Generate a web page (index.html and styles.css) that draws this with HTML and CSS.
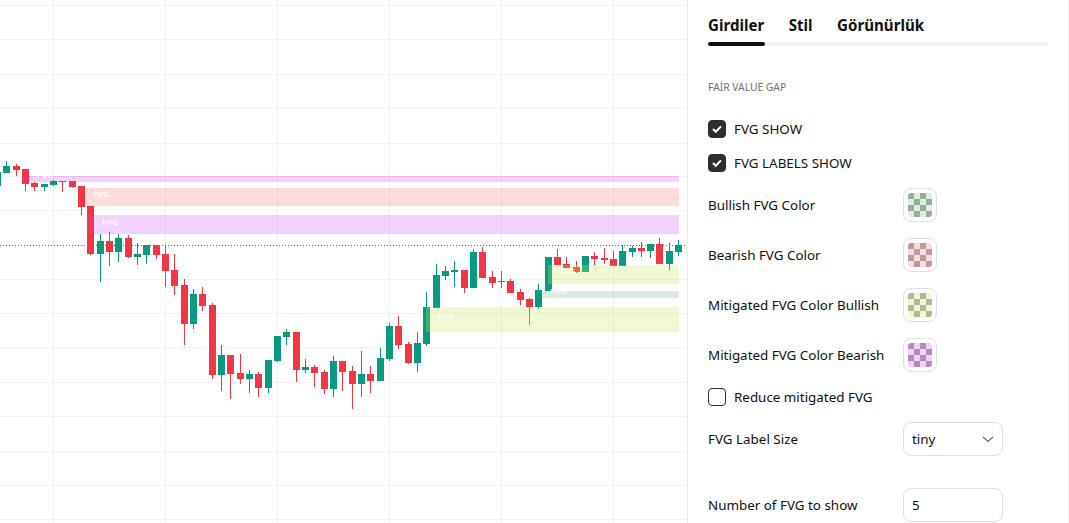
FILE: index.html
```html
<!DOCTYPE html>
<html lang="tr">
<head>
<meta charset="utf-8">
<title>FVG</title>
<link rel="stylesheet" href="styles.css">
</head>
<body>
<div class="app">
  <main class="chart">
    <svg class="plot" width="688" height="523" viewBox="0 0 688 523" shape-rendering="crispEdges">
      <path class="grid" d="M0 5.5H688M0 39.5H688M0 74.5H688M0 108.5H688M0 143.5H688M0 176.5H688M0 210.5H688M0 279.5H688M0 313.5H688M0 347.5H688M0 382.5H688M0 416.5H688M0 451.5H688M0 485.5H688M0 519.5H688M53.5 0V523M165.5 0V523M277.5 0V523M389.5 0V523M501.5 0V523M613.5 0V523"/>
      <path class="last" d="M0 245.5H688"/>
      <path class="up" d="M0 172h1v14h-1z
        M6 161h1v12h-1zM3 166h7v7h-7z
        M44 184h1v7h-1zM41 184h7v3h-7z
        M53 180h1v6h-1zM50 181h7v4h-7z
        M100 234h1v48h-1zM97 241h7v13h-7z
        M118 234h1v28h-1zM115 238h7v14h-7z
        M137 243h1v22h-1zM134 254h7v3h-7z
        M146 245h1v19h-1zM143 245h7v10h-7z
        M193 289h1v40h-1zM190 294h7v30h-7z
        M221 345h1v46h-1zM218 355h7v20h-7z
        M249 370h1v23h-1zM246 374h7v5h-7z
        M268 360h1v33h-1zM265 360h7v28h-7z
        M277 336h1v26h-1zM274 336h7v25h-7z
        M286 329h1v16h-1zM283 332h7v5h-7z
        M305 359h1v14h-1zM302 367h7v3h-7z
        M333 356h1v41h-1zM330 361h7v28h-7z
        M361 351h1v46h-1zM358 374h7v10h-7z
        M380 348h1v33h-1zM377 358h7v23h-7z
        M389 323h1v38h-1zM386 326h7v33h-7z
        M417 332h1v40h-1zM414 343h7v20h-7z
        M426 292h1v54h-1zM423 307h7v37h-7z
        M436 264h1v44h-1zM433 275h7v33h-7z
        M445 266h1v14h-1zM442 271h7v5h-7z
        M454 261h1v26h-1zM451 270h7v2h-7z
        M473 249h1v39h-1zM470 252h7v36h-7z
        M501 271h1v17h-1zM498 281h7v1h-7z
        M538 284h1v25h-1zM535 290h7v17h-7z
        M545 257h7v34h-7z
        M582 256h7v16h-7z
        M622 245h1v21h-1zM619 251h7v15h-7z
        M632 246h1v11h-1zM629 248h7v4h-7z
        M650 244h1v14h-1zM647 244h7v7h-7z
        M669 243h1v27h-1zM666 251h7v13h-7z
        M678 240h1v16h-1zM675 245h7v7h-7z"/>
      <path class="down" d="M16 164h1v12h-1zM13 166h7v4h-7z
        M25 169h1v22h-1zM22 169h7v15h-7z
        M34 182h1v9h-1zM31 183h7v4h-7z
        M62 181h1v11h-1zM59 181h7v1h-7z
        M72 181h1v7h-1zM69 181h7v6h-7z
        M81 186h1v29h-1zM78 186h7v21h-7z
        M90 206h1v49h-1zM87 206h7v48h-7z
        M109 232h1v34h-1zM106 241h7v11h-7z
        M128 235h1v23h-1zM125 238h7v19h-7z
        M156 245h1v14h-1zM153 245h7v10h-7z
        M165 246h1v41h-1zM162 254h7v17h-7z
        M174 254h1v41h-1zM171 270h7v16h-7z
        M184 279h1v66h-1zM181 285h7v39h-7z
        M202 287h1v24h-1zM199 294h7v12h-7z
        M212 303h1v76h-1zM209 305h7v70h-7z
        M230 355h1v44h-1zM227 355h7v19h-7z
        M240 354h1v30h-1zM237 373h7v6h-7z
        M258 372h1v25h-1zM255 374h7v14h-7z
        M296 332h1v50h-1zM293 332h7v38h-7z
        M314 365h1v22h-1zM311 367h7v6h-7z
        M324 370h1v24h-1zM321 372h7v17h-7z
        M342 361h1v30h-1zM339 361h7v11h-7z
        M352 366h1v43h-1zM349 371h7v13h-7z
        M370 366h1v27h-1zM367 374h7v7h-7z
        M398 316h1v33h-1zM395 326h7v19h-7z
        M408 342h1v22h-1zM405 344h7v19h-7z
        M464 270h1v23h-1zM461 270h7v18h-7z
        M482 247h1v31h-1zM479 252h7v26h-7z
        M492 271h1v17h-1zM489 277h7v6h-7z
        M510 279h1v14h-1zM507 281h7v12h-7z
        M520 289h1v16h-1zM517 292h7v8h-7z
        M529 298h1v27h-1zM526 299h7v8h-7z
        M557 249h1v16h-1zM554 257h7v8h-7z
        M566 257h1v11h-1zM563 264h7v4h-7z
        M576 261h1v12h-1zM573 267h7v5h-7z
        M594 252h1v13h-1zM591 256h7v3h-7z
        M604 248h1v16h-1zM601 258h7v2h-7z
        M613 251h1v15h-1zM610 259h7v7h-7z
        M641 242h1v15h-1zM638 248h7v3h-7z
        M659 238h1v26h-1zM656 244h7v20h-7z"/>
      <rect class="zone violet" x="25" y="176" width="654" height="6"/>
      <rect class="zone violet-edge" x="25" y="176" width="654" height="1"/>
      <rect class="zone rose" x="85" y="188" width="594" height="18"/>
      <rect class="zone violet" x="89" y="215" width="590" height="19"/>
      <rect class="zone lime" x="426" y="307" width="253" height="25"/>
      <rect class="zone lime" x="548" y="265" width="131" height="19"/>
      <rect class="zone mint" x="538" y="291" width="141" height="7"/>
      <g class="tag">
        <text x="37" y="178">FVG</text>
        <text x="93" y="197">FVG</text>
        <text x="102" y="225">FVG</text>
        <text x="438" y="319">FVG</text>
        <text x="559" y="274">FVG</text>
        <text x="550" y="294">FVG</text>
      </g>
    </svg>
  </main>
  <aside class="panel">
    <nav class="tabs">
      <div class="tab-row">
        <span class="tab">Girdiler</span>
        <span class="tab">Stil</span>
        <span class="tab">Görünürlük</span>
      </div>
      <div class="track"><div class="thumb"></div></div>
    </nav>
    <h2 class="group">FAİR VALUE GAP</h2>
    <div class="checks">
      <label class="check"><span class="box on"><svg width="12" height="10" viewBox="0 0 12 10"><path d="M2 5l2.8 2.8L10 2.4"/></svg></span>FVG SHOW</label>
      <label class="check"><span class="box on"><svg width="12" height="10" viewBox="0 0 12 10"><path d="M2 5l2.8 2.8L10 2.4"/></svg></span>FVG LABELS SHOW</label>
    </div>
    <div class="colors">
      <div class="row"><span class="name">Bullish FVG Color</span><span class="swatch"><i class="chip green"></i></span></div>
      <div class="row"><span class="name">Bearish FVG Color</span><span class="swatch"><i class="chip red"></i></span></div>
      <div class="row"><span class="name">Mitigated FVG Color Bullish</span><span class="swatch"><i class="chip olive"></i></span></div>
      <div class="row"><span class="name">Mitigated FVG Color Bearish</span><span class="swatch"><i class="chip purple"></i></span></div>
    </div>
    <label class="check reduce"><span class="box"></span>Reduce mitigated FVG</label>
    <div class="row size"><span class="name">FVG Label Size</span>
      <span class="field">tiny<svg width="12" height="7" viewBox="0 0 12 7"><path d="M1 1l5 4.5L11 1"/></svg></span>
    </div>
    <div class="row count"><span class="name">Number of FVG to show</span>
      <span class="field">5</span>
    </div>
  </aside>
</div>
</body>
</html>
```
FILE: styles.css
```css
* { box-sizing: border-box; }
html, body { margin: 0; height: 100%; overflow: hidden; background: #fff; }
body { font-family: "Noto Sans", sans-serif; color: #0f0f0f; }
.app { display: flex; width: 1069px; height: 523px; }
.chart { flex: 0 0 687px; height: 523px; overflow: hidden; }
.plot { display: block; }
.grid { fill: none; stroke: #f2f2f3; stroke-width: 1; }
.last { fill: none; stroke: #089981; stroke-width: 1; stroke-dasharray: 1 2; }
.up { fill: #089981; }
.down { fill: #f23645; }
.zone { stroke: none; }
.violet { fill: rgba(200, 50, 230, .22); }
.violet-edge { fill: rgba(200, 50, 230, .1); }
.rose { fill: rgba(247, 82, 70, .2); }
.lime { fill: rgba(205, 233, 95, .28); }
.mint { fill: rgba(76, 160, 90, .2); }
.tag { font: 700 7px "DejaVu Sans", sans-serif; fill: #fff; fill-opacity: .8; }
.panel { flex: 1; border-left: 1px solid #ebebeb; border-right: 1px solid #ebebeb; padding: 15px 20px 0 20px; display: flex; flex-direction: column; font-size: 13.4px; }
.tabs { display: flex; flex-direction: column; }
.tab-row { display: flex; gap: 24.5px; height: 20px; align-items: center; }
.tab { font-size: 15.1px; font-weight: 700; }
.track { height: 4px; margin-top: 7px; background: #f2f2f2; border-radius: 2px; }
.thumb { width: 57px; height: 4px; background: #0f0f0f; border-radius: 2px; }
.group { margin: 35px 0 0; font-size: 10.3px; font-weight: 400; line-height: 12px; color: #707070; }
.checks { display: flex; flex-direction: column; gap: 16px; margin-top: 27px; }
.check { display: flex; align-items: center; gap: 8px; height: 18px; }
.box { width: 18px; height: 18px; border: 1px solid #2e2e2e; border-radius: 4px; display: flex; align-items: center; justify-content: center; }
.box.on { background: #2e2e2e; }
.box path { fill: none; stroke: #fff; stroke-width: 2; }
.colors { display: flex; flex-direction: column; gap: 16px; margin-top: 16px; }
.row { display: flex; align-items: center; }
.name { flex: 0 0 195px; }
.swatch { width: 34px; height: 34px; border: 1px solid #e0e0e0; border-radius: 8px; padding: 4px; }
.chip { display: block; width: 24px; height: 24px; border-radius: 3px; background-size: 12px 12px; }
.green { background-image: repeating-conic-gradient(#dcf0dd 0 25%, #98ad9e 0 50%); }
.red { background-image: repeating-conic-gradient(#ffdcdb 0 25%, #bd9a9e 0 50%); }
.olive { background-image: repeating-conic-gradient(#f1f9d2 0 25%, #b1b799 0 50%); }
.purple { background-image: repeating-conic-gradient(#f3d2f9 0 25%, #b48cbc 0 50%); }
.reduce { margin-top: 16px; }
.size { margin-top: 16px; }
.count { margin-top: 32px; }
.field { flex: 0 0 100px; height: 34px; border: 1px solid #e0e0e0; border-radius: 8px; padding: 0 8px; display: flex; align-items: center; justify-content: space-between; }
.field path { fill: none; stroke: #707070; stroke-width: 1.3; }
```
